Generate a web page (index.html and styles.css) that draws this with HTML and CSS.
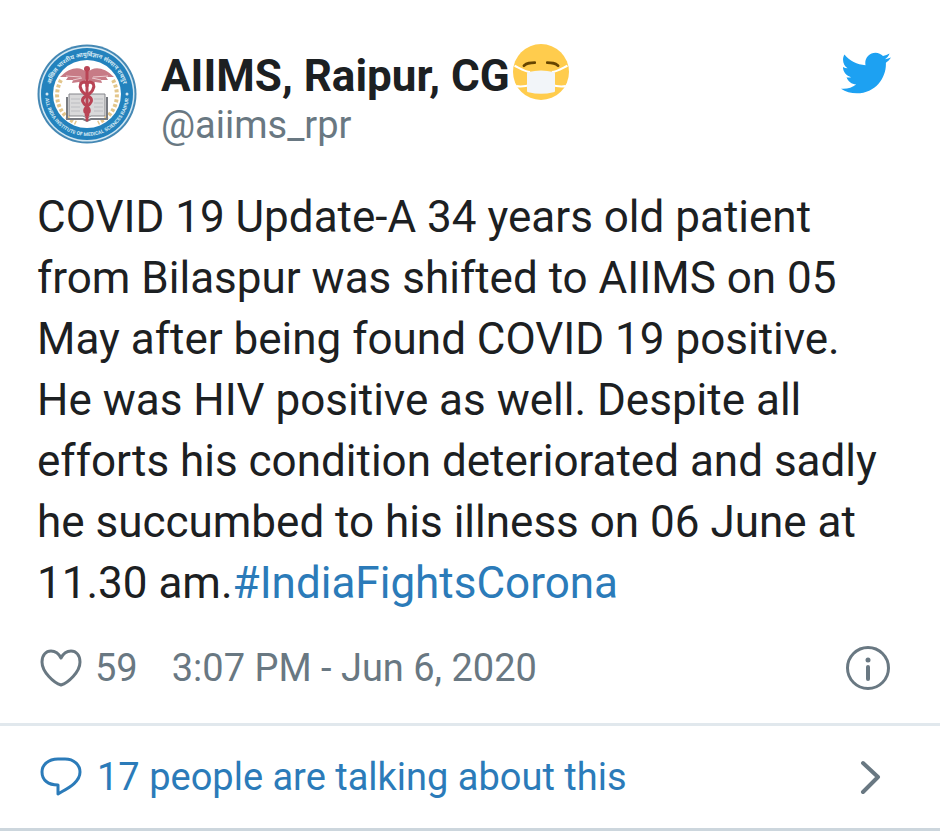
FILE: index.html
```html
<!DOCTYPE html>
<html lang="en">
  <head>
    <meta charset="UTF-8" />
    <meta name="viewport" content="width=device-width, initial-scale=1.0" />
    <title>AIIMS, Raipur, CG on Twitter</title>
    <link rel="stylesheet" href="styles.css">
  </head>
  <body>
    <article class="tweet">
      <div class="tweet-body">
        <header class="tweet-header">
          <a class="author" href="#">
            <svg class="avatar" viewBox="0 0 100 100" role="img" aria-label="AIIMS Raipur">
              <defs>
                <path id="ring-top" d="M12.500 50a37.500 37.500 0 0 1 75 0" />
                <path id="ring-bottom" d="M8 50a42 42 0 0 0 84 0" />
              </defs>
              <circle cx="50" cy="50" r="49.500" fill="#4588b4" />
              <circle cx="50" cy="50" r="47.500" fill="#d3e8f3" />
              <circle cx="50" cy="50" r="46" fill="#2382bd" />
              <circle cx="50" cy="50" r="34" fill="#fff" />
              <text class="ring-text hindi"><textPath href="#ring-top" startOffset="50%" text-anchor="middle">अखिल भारतीय आयुर्विज्ञान संस्थान रायपुर</textPath></text>
              <text class="ring-text"><textPath href="#ring-bottom" startOffset="50%" text-anchor="middle">ALL INDIA INSTITUTE OF MEDICAL SCIENCES RAIPUR</textPath></text>
              <circle cx="10" cy="50" r="1.500" fill="#d3e8f3" />
              <circle cx="90" cy="50" r="1.500" fill="#d3e8f3" />
              <!-- laurel -->
              <g fill="none" stroke="#e3c68b" stroke-width="4" stroke-dasharray="3 2">
                <path d="M24 36C16 51 20 70 39 79" />
                <path d="M76 36C84 51 80 70 61 79" />
              </g>
              <!-- book -->
              <path d="M32 50h14l4 3 4-3h14v22H54l-4 2-4-2H32z" fill="#d9d9da" stroke="#85868b" stroke-width="1" />
              <path d="M30 53v22h16l4 2 4-2h16V53" fill="none" stroke="#777a80" stroke-width="2" />
              <path d="M34 55h9M34 59h9M34 63h9M34 67h9M57 55h9M57 59h9M57 63h9M57 67h9" stroke="#bcbdc1" stroke-width="1" />
              <!-- caduceus -->
              <path d="M50 29C44 22 34 22 23 33l8 0-2 3 7 0-1 3 7-1 1 2 5-3 2-4 2 4 5 3 1-2 7 1-1-3 7 0-2-3 8 0C66 22 56 22 50 29z" fill="#c77b86" />
              <path d="M29 32l15 1M36 36l9-2M71 32l-15 1M64 36l-9-2" stroke="#eccbd0" stroke-width="1" />
              <g fill="none" stroke="#b94455" stroke-linecap="round">
                <path d="M50 26v50" stroke-width="3" />
                <path d="M44 45c-4-8 8-9 6-3M56 45c4-8-8-9-6-3M44 45c1 6 13 7 10 13-2 5-8 5-6 10l3 3M56 45c-1 6-13 7-10 13 2 5 8 5 6 10l-3 3" stroke-width="3" />
              </g>
              <circle cx="50" cy="25" r="3" fill="#b94455" />
            </svg>
            <span class="author-text">
              <span class="author-name">
                AIIMS, Raipur, CG<svg class="emoji" viewBox="0 0 36 36" role="img" aria-label="Face with medical mask">
                  <circle cx="18" cy="18" r="18" fill="#ffcc4d" />
                  <path d="M1 14c4 2 7 4 10 4M2 27c4 1 7 0 10-1M35 14c-4 2-7 4-10 4M34 27c-4 1-7 0-10-1" fill="none" stroke="#fff" stroke-width="1.300" />
                  <path d="M10 18q8-2 16 0 1 0 1 1v11q0 1-1 1-8 2-16 0-1 0-1-1V19q0-1 1-1z" fill="#f2f5f9" />
                  <path d="M7 14c2-2 4-2 7-2M29 14c-2-2-4-2-7-2" fill="none" stroke="#664500" stroke-width="1.700" stroke-linecap="round" />
                </svg>
              </span>
              <span class="author-handle">@aiims_rpr</span>
            </span>
          </a>
          <a class="brand" href="#" aria-label="View on Twitter">
            <svg class="bird" viewBox="0 2 24 20">
              <path fill="#1da1f2" d="M23.954 4.569c-.885.389-1.830.654-2.825.775 1.014-.611 1.794-1.574 2.163-2.723-.951.555-2.005.959-3.127 1.184-.896-.959-2.173-1.559-3.591-1.559-2.717 0-4.920 2.203-4.920 4.917 0 .390.045.765.127 1.124C7.691 8.094 4.066 6.130 1.640 3.161c-.427.722-.666 1.561-.666 2.475 0 1.710.870 3.213 2.188 4.096-.807-.026-1.566-.248-2.228-.616v.061c0 2.385 1.693 4.374 3.946 4.827-.413.111-.849.171-1.296.171-.314 0-.615-.030-.916-.086.631 1.953 2.445 3.377 4.604 3.417-1.680 1.319-3.809 2.105-6.102 2.105-.390 0-.779-.023-1.170-.067 2.189 1.394 4.768 2.209 7.557 2.209 9.054 0 13.999-7.496 13.999-13.986 0-.209 0-.420-.015-.630.961-.689 1.800-1.560 2.460-2.548z" />
            </svg>
          </a>
        </header>

        <p class="tweet-text">COVID 19 Update-A 34 years old patient from Bilaspur was shifted to AIIMS on 05 May after being found COVID 19 positive. He was HIV positive as well. Despite all efforts his condition deteriorated and sadly he succumbed to his illness on 06 June at 11.30 am.<a href="#">#IndiaFightsCorona</a></p>

        <div class="tweet-meta">
          <a class="likes" href="#" aria-label="59 likes">
            <svg class="icon" viewBox="-1 0 46 46">
              <path d="M23 40C16 38 4 27 4 17 4 10 8 6 13 6c5 0 8 3 10 7 2-4 5-7 10-7 5 0 9 4 9 11 0 10-12 21-19 23z" />
            </svg>
            <span>59</span>
          </a>
          <a class="date" href="#">3:07 PM - Jun 6, 2020</a>
          <a class="info" href="#" aria-label="Twitter Ads info and privacy">
            <svg class="icon" viewBox="0 0 46 46">
              <circle cx="23" cy="23" r="20.500" />
              <path d="M23 22v12" stroke-width="4" />
              <circle cx="23" cy="15" r="2.500" fill="currentColor" stroke="none" />
            </svg>
          </a>
        </div>
      </div>

      <a class="conversation" href="#">
        <svg class="icon" viewBox="-1 0 46 46">
          <path d="M20 5h7c9 0 15 6 15 13 0 11-14 17-22 22v-9C10 31 4 26 4 18 4 11 10 5 20 5z" />
        </svg>
        <span>17 people are talking about this</span>
        <svg class="icon chevron" viewBox="0 0 46 46">
          <path class="chevron-line" d="M18 9l15 14-15 15" />
        </svg>
      </a>
    </article>
  </body>
</html>
```
FILE: styles.css
```css
* {
  box-sizing: border-box;
}

body {
  margin: 0;
  background-color: #fff;
  font-family: Roboto, "Noto Sans", sans-serif;
  color: #1c2022;
}

a {
  color: #2b7bb9;
  text-decoration: none;
}

.tweet {
  border-bottom: 3px solid #ccd6dd;
}

.tweet-body {
  padding: 44px 49px 32px 37px;
}

.tweet-header {
  display: flex;
  justify-content: space-between;
  align-items: flex-start;
}

.author {
  display: flex;
  gap: 24px;
  color: inherit;
}

.avatar {
  width: 100px;
  height: 100px;
}

.ring-text {
  fill: #d3e8f3;
  font-size: 5px;
  font-weight: 700;
}

.ring-text.hindi {
  font-size: 6px;
}

.author-text {
  display: flex;
  flex-direction: column;
}

.author-name {
  display: flex;
  align-items: flex-start;
  gap: 3px;
  font-size: 44px;
  line-height: 64px;
  font-weight: 700;
}

.emoji {
  width: 56px;
  height: 56px;
}

.author-handle {
  color: #697882;
  font-size: 38px;
  line-height: 34px;
}

.brand {
  display: flex;
  padding-top: 8px;
}

.bird {
  width: 50px;
  height: 42px;
}

.tweet-text {
  margin: 43px 0 31px;
  font-size: 44px;
  line-height: 61px;
}

.tweet-meta {
  display: flex;
  align-items: center;
  gap: 34px;
  font-size: 38px;
  line-height: 46px;
}

.tweet-meta a {
  color: #697882;
}

.likes {
  display: flex;
  gap: 12px;
}

.info {
  display: flex;
  margin-left: auto;
}

.icon {
  width: 46px;
  height: 46px;
  fill: none;
  stroke: currentColor;
  stroke-width: 3px;
  stroke-linecap: round;
  stroke-linejoin: round;
}

.conversation {
  display: flex;
  align-items: center;
  gap: 14px;
  padding: 28px 49px 28px 37px;
  border-top: 3px solid #e1e8ed;
  font-size: 38px;
  line-height: 46px;
}

.chevron {
  margin-left: auto;
  color: #697882;
}

.chevron-line {
  stroke-width: 4px;
}
```
